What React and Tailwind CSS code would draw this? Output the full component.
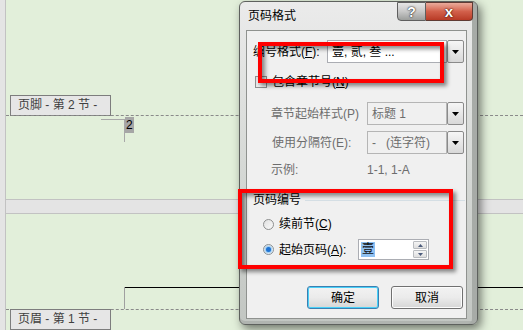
import React from "react";

const FONT = { fontFamily: '"Liberation Sans","Noto Sans CJK SC",sans-serif' };

function Arrow() {
  return (
    <svg width="7" height="4" viewBox="0 0 7 4">
      <path d="M0 0H7L3.5 4Z" fill="#000" />
    </svg>
  );
}

function Combo({ width, text, disabled }) {
  return (
    <div className={`flex h-[23px] ${width}`}>
      <div
        className={`flex-1 flex items-center pl-[4px] border whitespace-pre ${
          disabled ? "border-[#b5b5b5] bg-[#f0f0f0] text-[#6d6d6d]" : "border-[#abadb3] bg-white text-black"
        }`}
      >
        {text}
      </div>
      <div className="w-[17px] h-[23px] flex items-center justify-center border border-[#8a8a8a] rounded-[2px] bg-gradient-to-b from-[#f6f6f6] to-[#d8d8d8]">
        <Arrow />
      </div>
    </div>
  );
}

function Radio({ checked }) {
  return (
    <div className="w-[11px] h-[11px] rounded-full border border-[#8e8f8f] bg-gradient-to-br from-[#e0e0e0] to-[#fafafa] flex items-center justify-center">
      {checked && (
        <div className="w-[5px] h-[5px] rounded-full bg-[#1f73d3] shadow-[0_0_2px_1px_#7fc1f5]" />
      )}
    </div>
  );
}

function Label({ children }) {
  return (
    <div className="w-[101px] h-[21px] border border-[#7d7d7d] bg-[#e6e6e6] text-[#404040] text-[12px] leading-[19px] pl-[7px] whitespace-pre">
      {children}
    </div>
  );
}

export default function App() {
  return (
    <div className="relative w-[523px] h-[330px] overflow-hidden bg-[#e4e4e4] text-[12px]" style={FONT}>
      {/* document background */}
      <div className="flex h-full">
        <div className="w-[5px] bg-[#e4e4e4]" />
        <div className="flex-1 flex flex-col border-l border-[#c2c2c2]">
          {/* page 1 */}
          <div className="h-[215px] bg-[#e2efda] border-b border-[#c2c2c2] flex flex-col">
            <div className="pt-[95px] pl-[4px]">
              <Label>{"页脚 - 第 2 节 -"}</Label>
            </div>
            <div className="-mt-px border-t border-dashed border-[#8a8a8a]" />
            <div className="flex ml-[95px]">
              <div className="w-[23px] h-[4px] border-b border-[#a8a8a8]" />
              <div className="w-px h-[23px] mt-[3px] bg-[#a8a8a8]" />
              <div className="mt-[1px] h-[16px] px-[1px] bg-[#a6a6a6] text-[12px] leading-[16px] text-black">2</div>
            </div>
          </div>
          {/* gap */}
          <div className="h-[14px] bg-[#e4e4e4]" />
          {/* page 2 */}
          <div className="flex-1 bg-[#e2efda] border-t border-[#c2c2c2] flex flex-col">
            <div className="pt-[72px] pl-[118px]">
              <div className="h-[22px] border-l border-[#a0a0a0]">
                <div className="mt-[1px] h-px bg-black" />
              </div>
            </div>
            <div className="border-t border-dashed border-[#8a8a8a]" />
            <div className="-mt-px pl-[4px]">
              <Label>{"页眉 - 第 1 节 -"}</Label>
            </div>
          </div>
        </div>
      </div>

      {/* dialog */}
      <div className="absolute left-[239px] top-[1px] w-[239px] h-[324px] rounded-[6px] border border-[#5e615e] bg-gradient-to-b from-[#ebebeb] via-[#d6d9d6] to-[#c2c6c2] shadow-[inset_-5px_0_0_#a7aba7,inset_0_-3px_0_#b0b4b0,3px_4px_10px_rgba(0,0,0,0.5)] flex flex-col pl-[6px] pr-[10px] pb-[5px]">
        {/* title */}
        <div className="h-[28px] flex items-start">
          <div className="pl-[2px] pt-[6px] text-[12px] leading-[16px] text-black">页码格式</div>
          <div className="ml-auto mr-[-6px] flex">
            <div className="w-[29px] h-[19px] border border-[#5f5f5f] rounded-bl-[4px] bg-gradient-to-b from-[#e6e6e6] via-[#c8c8c8] to-[#9c9e9c] flex items-center justify-center text-white font-bold text-[14px] leading-none [text-shadow:0_0_2px_#222,0_0_1px_#222]">
              ?
            </div>
            <div className="w-[47px] h-[19px] border border-l-0 border-[#5f3a33] rounded-br-[4px] bg-gradient-to-b from-[#e9ab9c] via-[#d2604b] to-[#b83a25] flex items-center justify-center text-white font-bold text-[15px] leading-none [text-shadow:0_0_2px_#3a0a00,0_0_1px_#3a0a00]">
              x
            </div>
          </div>
        </div>
        {/* client */}
        <div className="flex-1 border border-[#8f928f] bg-[#f0f0f0] flex flex-col pl-[6px] text-black">
          <div className="mt-[9px] h-[23px] flex items-center">
            <div className="w-[74px]">编号格式(<u>F</u>):</div>
            <Combo width="w-[137px]" text="壹, 贰, 叁 ..." />
          </div>
          <div className="mt-[13px] h-[12px] flex items-center">
            <div className="ml-[2px] w-[12px] h-[12px] border border-[#8e8f8f] bg-gradient-to-br from-[#dcdcdc] to-[#f7f7f7] p-[2px]">
              <div className="w-full h-full bg-gradient-to-br from-[#c8c8c8] to-[#eeeeee]" />
            </div>
            <div className="ml-[5px] leading-[12px]">包含章节号(<u>N</u>)</div>
          </div>
          <div className="mt-[14px] h-[23px] flex items-center">
            <div className="w-[114px] pl-[18px] text-[#6d6d6d]">章节起始样式(P)</div>
            <Combo width="w-[97px]" text="标题 1" disabled />
          </div>
          <div className="mt-[6px] h-[23px] flex items-center">
            <div className="w-[114px] pl-[19px] text-[#6d6d6d]">使用分隔符(E):</div>
            <Combo width="w-[97px]" text="-   (连字符)" disabled />
          </div>
          <div className="mt-[8px] h-[16px] flex items-center text-[#6d6d6d]">
            <div className="w-[114px] pl-[18px]">示例:</div>
            <div>1-1, 1-A</div>
          </div>
          <div className="mt-[14px] h-[16px] flex items-center">
            <div className="w-[52px]">页码编号</div>
            <div className="flex-1 h-px bg-[#d5dfe5] mr-px" />
          </div>
          <div className="mt-[9px] h-[14px] flex items-center pl-[10px]">
            <Radio />
            <div className="ml-[5px]">续前节(<u>C</u>)</div>
          </div>
          <div className="mt-[8px] h-[21px] flex items-center pl-[10px]">
            <Radio checked />
            <div className="ml-[5px] w-[79px]">起始页码(<u>A</u>):</div>
            <div className="w-[71px] h-[21px] border border-[#abadb3] bg-white flex items-center pl-[2px] pr-[1px]">
              <span className="bg-[#8fc1f2] text-[#111] px-[1px] leading-[15px]">壹</span>
              <div className="ml-auto flex flex-col gap-[1px]">
                <div className="w-[14px] h-[8px] border border-[#b9bcc0] rounded-[1px] bg-gradient-to-b from-[#f5f5f5] to-[#dedede] flex items-center justify-center">
                  <svg width="5" height="3" viewBox="0 0 5 3"><path d="M0 3H5L2.5 0Z" fill="#4b5b7b" /></svg>
                </div>
                <div className="w-[14px] h-[8px] border border-[#b9bcc0] rounded-[1px] bg-gradient-to-b from-[#f5f5f5] to-[#dedede] flex items-center justify-center">
                  <svg width="5" height="3" viewBox="0 0 5 3"><path d="M0 0H5L2.5 3Z" fill="#4b5b7b" /></svg>
                </div>
              </div>
            </div>
          </div>
          <div className="mt-[26px] h-[23px] flex pl-[54px] gap-[12px]">
            <div className="w-[72px] h-[23px] rounded-[3px] border border-[#3c7fb1] bg-gradient-to-b from-[#f2f2f2] via-[#ebebeb] to-[#d6d6d6] shadow-[inset_0_0_0_1px_#48d0f8] flex items-center justify-center">
              确定
            </div>
            <div className="w-[72px] h-[23px] rounded-[3px] border border-[#707070] bg-gradient-to-b from-[#f2f2f2] via-[#ebebeb] to-[#d6d6d6] shadow-[inset_0_0_0_1px_#fcfcfc] flex items-center justify-center">
              取消
            </div>
          </div>
        </div>
      </div>

      {/* annotation boxes */}
      <div className="absolute left-[258px] top-[42px] w-[186px] h-[41px] border-[4px] border-[#ff0000] shadow-[3px_3px_4px_rgba(0,0,0,0.45),inset_3px_3px_4px_rgba(0,0,0,0.45)]" />
      <div className="absolute left-[238px] top-[189px] w-[215px] h-[80px] border-[4px] border-[#ff0000] shadow-[3px_3px_4px_rgba(0,0,0,0.45),inset_3px_3px_4px_rgba(0,0,0,0.45)]" />
    </div>
  );
}
